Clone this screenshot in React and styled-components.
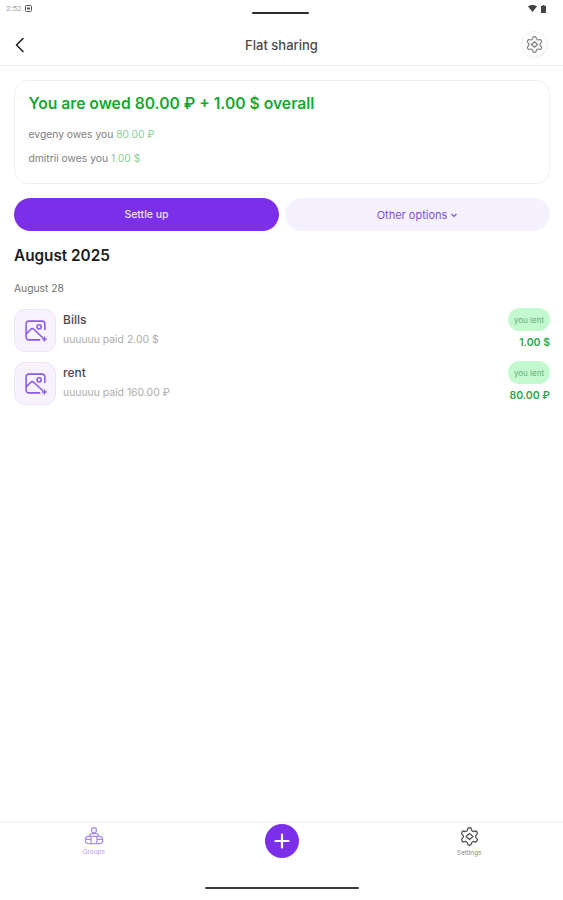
import React from 'react';
import styled, { createGlobalStyle } from 'styled-components';

const Global = createGlobalStyle`
  html, body { margin: 0; padding: 0; background: #fff; }
  * { box-sizing: border-box; }
  body { font-family: Inter, "Noto Sans", sans-serif; }
`;

const Page = styled.div`
  width: 563px; height: 900px; display: flex; flex-direction: column; background: #fff; overflow: hidden;
`;
const StatusBar = styled.div`
  height: 24px; padding: 0 17px 0 6px; display: flex; align-items: flex-start; justify-content: space-between; flex: none;
`;
const StatusLeft = styled.div`
  display: flex; align-items: center; gap: 4px; height: 17px; color: #a0a0a0; font-size: 8px; font-family: Roboto, sans-serif;
`;
const Notch = styled.div`
  width: 57px; height: 2px; margin-top: 12px; background: #2b2b2b; border-radius: 1px;
`;
const StatusRight = styled.div`
  display: flex; align-items: center; gap: 4px; height: 17px;
`;
const TopBar = styled.header`
  height: 42px; flex: none; display: flex; align-items: center; justify-content: space-between;
  padding: 0 15px 0 13px; border-bottom: 1px solid #eeeeee; position: relative;
`;
const Title = styled.div`
  font-size: 13px; font-weight: 500; color: #4a4a4a; position: absolute; left: 0; right: 0; text-align: center; pointer-events: none;
`;
const GearButton = styled.div`
  width: 27px; height: 27px; border-radius: 50%; border: 1px solid #f0f0f0; display: flex; align-items: center; justify-content: center;
`;
const Content = styled.main`
  flex: 1; padding: 14px 13px 0 14px; display: flex; flex-direction: column;
`;
const Card = styled.section`
  height: 104px; border: 1px solid #efefef; border-radius: 14px; padding: 13px 14px 0 13.5px;
`;
const Headline = styled.div`
  font-size: 15.7px; line-height: 20px; font-weight: 600; color: #16a82f; margin-bottom: 14px; white-space: nowrap;
`;
const Owes = styled.div`
  font-size: 10.3px; line-height: 12px; color: #808080; margin-bottom: 12px;
`;
const OwesAmount = styled.span`
  color: #8ccf98;
`;
const Buttons = styled.div`
  display: grid; grid-template-columns: 265px 265px; column-gap: 6px; margin-top: 14px;
`;
const Primary = styled.div`
  height: 33px; border-radius: 16.5px; background: #7c2fe8; color: #efe3ff; font-size: 10.5px; font-weight: 500;
  display: flex; align-items: center; justify-content: center;
`;
const Secondary = styled(Primary)`
  background: #f6f1fe; color: #7c4fe0; font-weight: 400; gap: 3px; font-size: 11px;
`;
const Month = styled.h2`
  margin: 15px 0 0; font-size: 15.3px; line-height: 20px; font-weight: 600; color: #1c1c1c;
`;
const Day = styled.div`
  margin-top: 16px; font-size: 10.3px; line-height: 12px; color: #707070;
`;
const List = styled.div`
  display: flex; flex-direction: column; gap: 10px; margin-top: 15px;
`;
const Row = styled.div`
  height: 43px; display: flex; align-items: stretch; gap: 7px;
`;
const Thumb = styled.div`
  width: 42px; height: 43px; flex: none; background: #f7f2fe; border: 1px solid #ece4fb; border-radius: 11px;
  display: flex; align-items: center; justify-content: center;
`;
const RowText = styled.div`
  flex: 1; display: flex; flex-direction: column; padding-top: 4px;
`;
const RowName = styled.div`
  font-size: 12px; line-height: 14px; color: #4a4a4a; font-weight: 500;
`;
const RowSub = styled.div`
  margin-top: 6px; font-size: 10.4px; line-height: 13px; color: #adadad;
`;
const RowRight = styled.div`
  display: flex; flex-direction: column; align-items: flex-end; margin-top: -1px;
`;
const Pill = styled.div`
  width: 42px; height: 23px; border-radius: 11.5px; background: #c4f9d0; color: #62ab73; font-size: 8px;
  display: flex; align-items: center; justify-content: center;
`;
const Amount = styled.div`
  margin-top: 5px; font-size: 10.5px; line-height: 13px; font-weight: 600; color: #2fa64b;
`;
const BottomNav = styled.nav`
  height: 66px; flex: none; border-top: 2px solid #f5f5f5; display: grid; grid-template-columns: 1fr 1fr 1fr;
`;
const NavItem = styled.div`
  display: flex; flex-direction: column; align-items: center; padding-top: 3px; gap: 2px;
  color: ${p => (p.$active ? '#b79cf3' : '#8c8c8c')}; font-size: 6.5px; line-height: 8px;
`;
const FabCell = styled.div`
  display: flex; justify-content: center; padding: 1px 0 0 1px;
`;
const Fab = styled.div`
  width: 34px; height: 34px; border-radius: 50%; background: #7c2fe8; display: flex; align-items: center; justify-content: center;
`;
const GestureArea = styled.div`
  height: 13px; flex: none; display: flex; justify-content: center;
`;
const HomeBar = styled.div`
  width: 154px; height: 2px; border-radius: 1px; background: #3a3a3a;
`;

const Gear = ({ size, color }) => (
  <svg width={size} height={size} viewBox="0 0 24 24" fill="none" stroke={color} strokeWidth="1.5" strokeLinejoin="round">
    <path d="M9.671 4.136a2.34 2.34 0 0 1 4.659 0 2.34 2.34 0 0 0 3.319 1.915 2.34 2.34 0 0 1 2.33 4.033 2.34 2.34 0 0 0 0 3.831 2.34 2.34 0 0 1-2.33 4.033 2.34 2.34 0 0 0-3.319 1.915 2.34 2.34 0 0 1-4.659 0 2.34 2.34 0 0 0-3.32-1.915 2.34 2.34 0 0 1-2.33-4.033 2.34 2.34 0 0 0 0-3.831A2.34 2.34 0 0 1 6.35 6.051a2.34 2.34 0 0 0 3.319-1.915" />
    <path d="M12 8.500l4 3.500-4 3.500-4-3.500z"/>
  </svg>
);

const PictureIcon = () => (
  <svg width="25" height="25" viewBox="0 0 24 24" fill="none" stroke="#8a5be6" strokeWidth="1.500" strokeLinecap="round" strokeLinejoin="round">
    <path d="M21 11V5.500a2.500 2.500 0 0 0-2.500-2.500h-13A2.500 2.500 0 0 0 3 5.500v13A2.500 2.500 0 0 0 5.500 21H16"/>
    <circle cx="15.500" cy="8.500" r="2"/>
    <path d="M3.300 15l4.200-4.200c.8-.8 2-.8 2.800 0l8.200 7.700"/>
    <path d="M20.500 18.500v3.500M18.800 20.200h3.500"/>
  </svg>
);

const GroupsIcon = () => (
  <svg width="20" height="20" viewBox="0 0 24 24" fill="none" stroke="#a98cf0" strokeWidth="1.500" strokeLinejoin="round">
    <circle cx="12" cy="5" r="3"/>
    <path d="M7 10.500c0-1 .7-1.500 1.500-1.500h7c.8 0 1.500.5 1.500 1.500v2H7z"/>
    <path d="M7 12c-3 0-5.500 1.500-5.500 4.500 0 2.500 1.500 4.500 3.500 4.500h14c2 0 3.500-2 3.500-4.500 0-3-2.500-4.500-5.500-4.500"/>
    <path d="M8.500 13v8M15.500 13v8"/>
    <path d="M2 16h6.500M15.500 16H22"/>
  </svg>
);

const expenses = [
  { name: 'Bills', paid: 'uuuuuu paid 2.00 $', lent: '1.00 $' },
  { name: 'rent', paid: 'uuuuuu paid 160.00 ₽', lent: '80.00 ₽' },
];

export default function App() {
  return (
    <Page>
      <Global />
      <StatusBar>
        <StatusLeft>
          <span>2:52</span>
          <svg width="7" height="7" viewBox="0 0 7 7"><rect x=".5" y=".5" width="6" height="6" rx="1" fill="none" stroke="#555"/><rect x="2" y="2.500" width="3" height="2" fill="#555"/></svg>
        </StatusLeft>
        <Notch />
        <StatusRight>
          <svg width="9" height="7" viewBox="0 0 9 7"><path d="M0 1.500C2.500-.5 6.500-.5 9 1.500L4.500 7z" fill="#444"/></svg>
          <svg width="5" height="8" viewBox="0 0 5 8"><path d="M1.500 0h2v1H5v7H0V1h1.500z" fill="#444"/></svg>
        </StatusRight>
      </StatusBar>
      <TopBar>
        <svg width="14" height="16" viewBox="0 0 14 16" fill="none" stroke="#222" strokeWidth="1.600" strokeLinecap="round" strokeLinejoin="round"><path d="M10 1.500L3.500 8l6.500 6.500"/></svg>
        <Title>Flat sharing</Title>
        <GearButton><Gear size={19} color="#808080" /></GearButton>
      </TopBar>
      <Content>
        <Card>
          <Headline>You are owed 80.00 ₽ + 1.00 $ overall</Headline>
          <Owes>evgeny owes you <OwesAmount>80.00 ₽</OwesAmount></Owes>
          <Owes>dmitrii owes you <OwesAmount>1.00 $</OwesAmount></Owes>
        </Card>
        <Buttons>
          <Primary>Settle up</Primary>
          <Secondary>
            Other options
            <svg width="8" height="8" viewBox="0 0 8 8" fill="none" stroke="#7c4fe0" strokeWidth="1.100"><path d="M1.500 3l2.500 2.500L6.500 3"/></svg>
          </Secondary>
        </Buttons>
        <Month>August 2025</Month>
        <Day>August 28</Day>
        <List>
          {expenses.map(e => (
            <Row key={e.name}>
              <Thumb><PictureIcon /></Thumb>
              <RowText>
                <RowName>{e.name}</RowName>
                <RowSub>{e.paid}</RowSub>
              </RowText>
              <RowRight>
                <Pill>you lent</Pill>
                <Amount>{e.lent}</Amount>
              </RowRight>
            </Row>
          ))}
        </List>
      </Content>
      <BottomNav>
        <NavItem $active><GroupsIcon />Groups</NavItem>
        <FabCell>
          <Fab>
            <svg width="18" height="18" viewBox="0 0 18 18" stroke="#fff" strokeWidth="2.200" strokeLinecap="round"><path d="M9 2.500v13M2.500 9h13"/></svg>
          </Fab>
        </FabCell>
        <NavItem><Gear size={21} color="#555" />Settings</NavItem>
      </BottomNav>
      <GestureArea><HomeBar /></GestureArea>
    </Page>
  );
}
